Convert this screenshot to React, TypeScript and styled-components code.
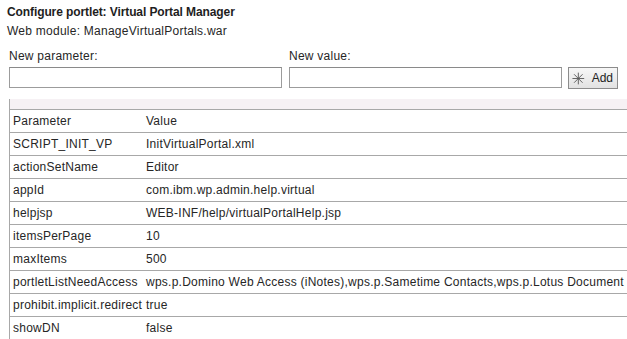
import styled, { createGlobalStyle } from "styled-components";

const GlobalStyle = createGlobalStyle`
  html, body {
    margin: 0;
    padding: 0;
    background: #fff;
    overflow: hidden;
  }
  body {
    font-family: "Liberation Sans", Arial, sans-serif;
    font-size: 12px;
    letter-spacing: 0.25px;
    color: #262626;
  }
`;

const params: [string, string][] = [
  ["SCRIPT_INIT_VP", "InitVirtualPortal.xml"],
  ["actionSetName", "Editor"],
  ["appId", "com.ibm.wp.admin.help.virtual"],
  ["helpjsp", "WEB-INF/help/virtualPortalHelp.jsp"],
  ["itemsPerPage", "10"],
  ["maxItems", "500"],
  [
    "portletListNeedAccess",
    "wps.p.Domino Web Access (iNotes),wps.p.Sametime Contacts,wps.p.Lotus Document Viewer",
  ],
  ["prohibit.implicit.redirect", "true"],
  ["showDN", "false"],
];

const AddIcon = () => (
  <svg width="15" height="15" viewBox="0 0 15 15">
    <g stroke="#5a5a5a" strokeWidth="1.1" strokeLinecap="round">
      <line x1="7.5" y1="1" x2="7.5" y2="14" />
      <line x1="1" y1="7.5" x2="14" y2="7.5" />
      <line x1="2.8" y1="2.8" x2="12.2" y2="12.2" />
      <line x1="12.2" y1="2.8" x2="2.8" y2="12.2" />
    </g>
  </svg>
);

export default function App() {
  return (
    <Page>
      <GlobalStyle />
      <Heading>
        <Title>Configure portlet: Virtual Portal Manager</Title>
        <Sub>Web module: ManageVirtualPortals.war</Sub>
      </Heading>
      <Form>
        <Field>
          <Label>New parameter:</Label>
          <Input type="text" />
        </Field>
        <Field>
          <Label>New value:</Label>
          <Row>
            <Input type="text" />
            <AddButton>
              <AddIcon />
              <span>Add</span>
            </AddButton>
          </Row>
        </Field>
      </Form>
      <TableWrap>
        <Band />
        <Table>
          <thead>
            <tr>
              <Cell as="th">Parameter</Cell>
              <Cell as="th">Value</Cell>
            </tr>
          </thead>
          <tbody>
            {params.map(([k, v]) => (
              <tr key={k}>
                <Cell>{k}</Cell>
                <Cell>{v}</Cell>
              </tr>
            ))}
          </tbody>
        </Table>
      </TableWrap>
    </Page>
  );
}

const Page = styled.div`
  padding-top: 4px;
  width: 900px;
`;
const Heading = styled.div`
  padding-left: 7px;
`;
const Title = styled.div`
  font-weight: 700;
  line-height: 16px;
  letter-spacing: -0.1px;
  color: #1e1e1e;
`;
const Sub = styled.div`
  margin-top: 3px;
  line-height: 16px;
`;
const Form = styled.div`
  display: flex;
  column-gap: 7px;
  padding-left: 9px;
  margin-top: 9px;
`;
const Field = styled.div`
  display: flex;
  flex-direction: column;
  row-gap: 3px;
`;
const Label = styled.label`
  line-height: 16px;
`;
const Row = styled.div`
  display: flex;
  align-items: flex-start;
  column-gap: 6px;
`;
const Input = styled.input`
  box-sizing: border-box;
  width: 273px;
  height: 21px;
  margin: 0;
  border: 1px solid #9c9c9c;
  border-top-color: #8a8a8a;
  background: #fff;
  padding: 0 3px;
  font: inherit;
`;
const AddButton = styled.button`
  box-sizing: border-box;
  display: flex;
  align-items: center;
  column-gap: 7px;
  height: 22px;
  width: 50px;
  margin: 0;
  padding: 0 4px 0 3px;
  border: 1px solid #8c8c8c;
  background: linear-gradient(#f7f7f7, #e2e2e2);
  font: inherit;
  color: #222;
  cursor: pointer;
`;
const TableWrap = styled.div`
  margin-top: 10px;
  margin-left: 9px;
  border-left: 1px solid #a8a8a8;
`;
const Band = styled.div`
  height: 10px;
  background: #f6f1f4;
  border-bottom: 1px solid #a8a8a8;
`;
const Table = styled.table`
  border-collapse: collapse;
  table-layout: fixed;
  width: 891px;
  tr {
    border-bottom: 1px solid #a8a8a8;
  }
  td:first-child,
  th:first-child {
    width: 130px;
  }
`;
const Cell = styled.td`
  height: 22px;
  padding: 0 0 0 3px;
  text-align: left;
  font-weight: 400;
  white-space: nowrap;
  overflow: hidden;
  vertical-align: middle;
  line-height: 22px;
`;
